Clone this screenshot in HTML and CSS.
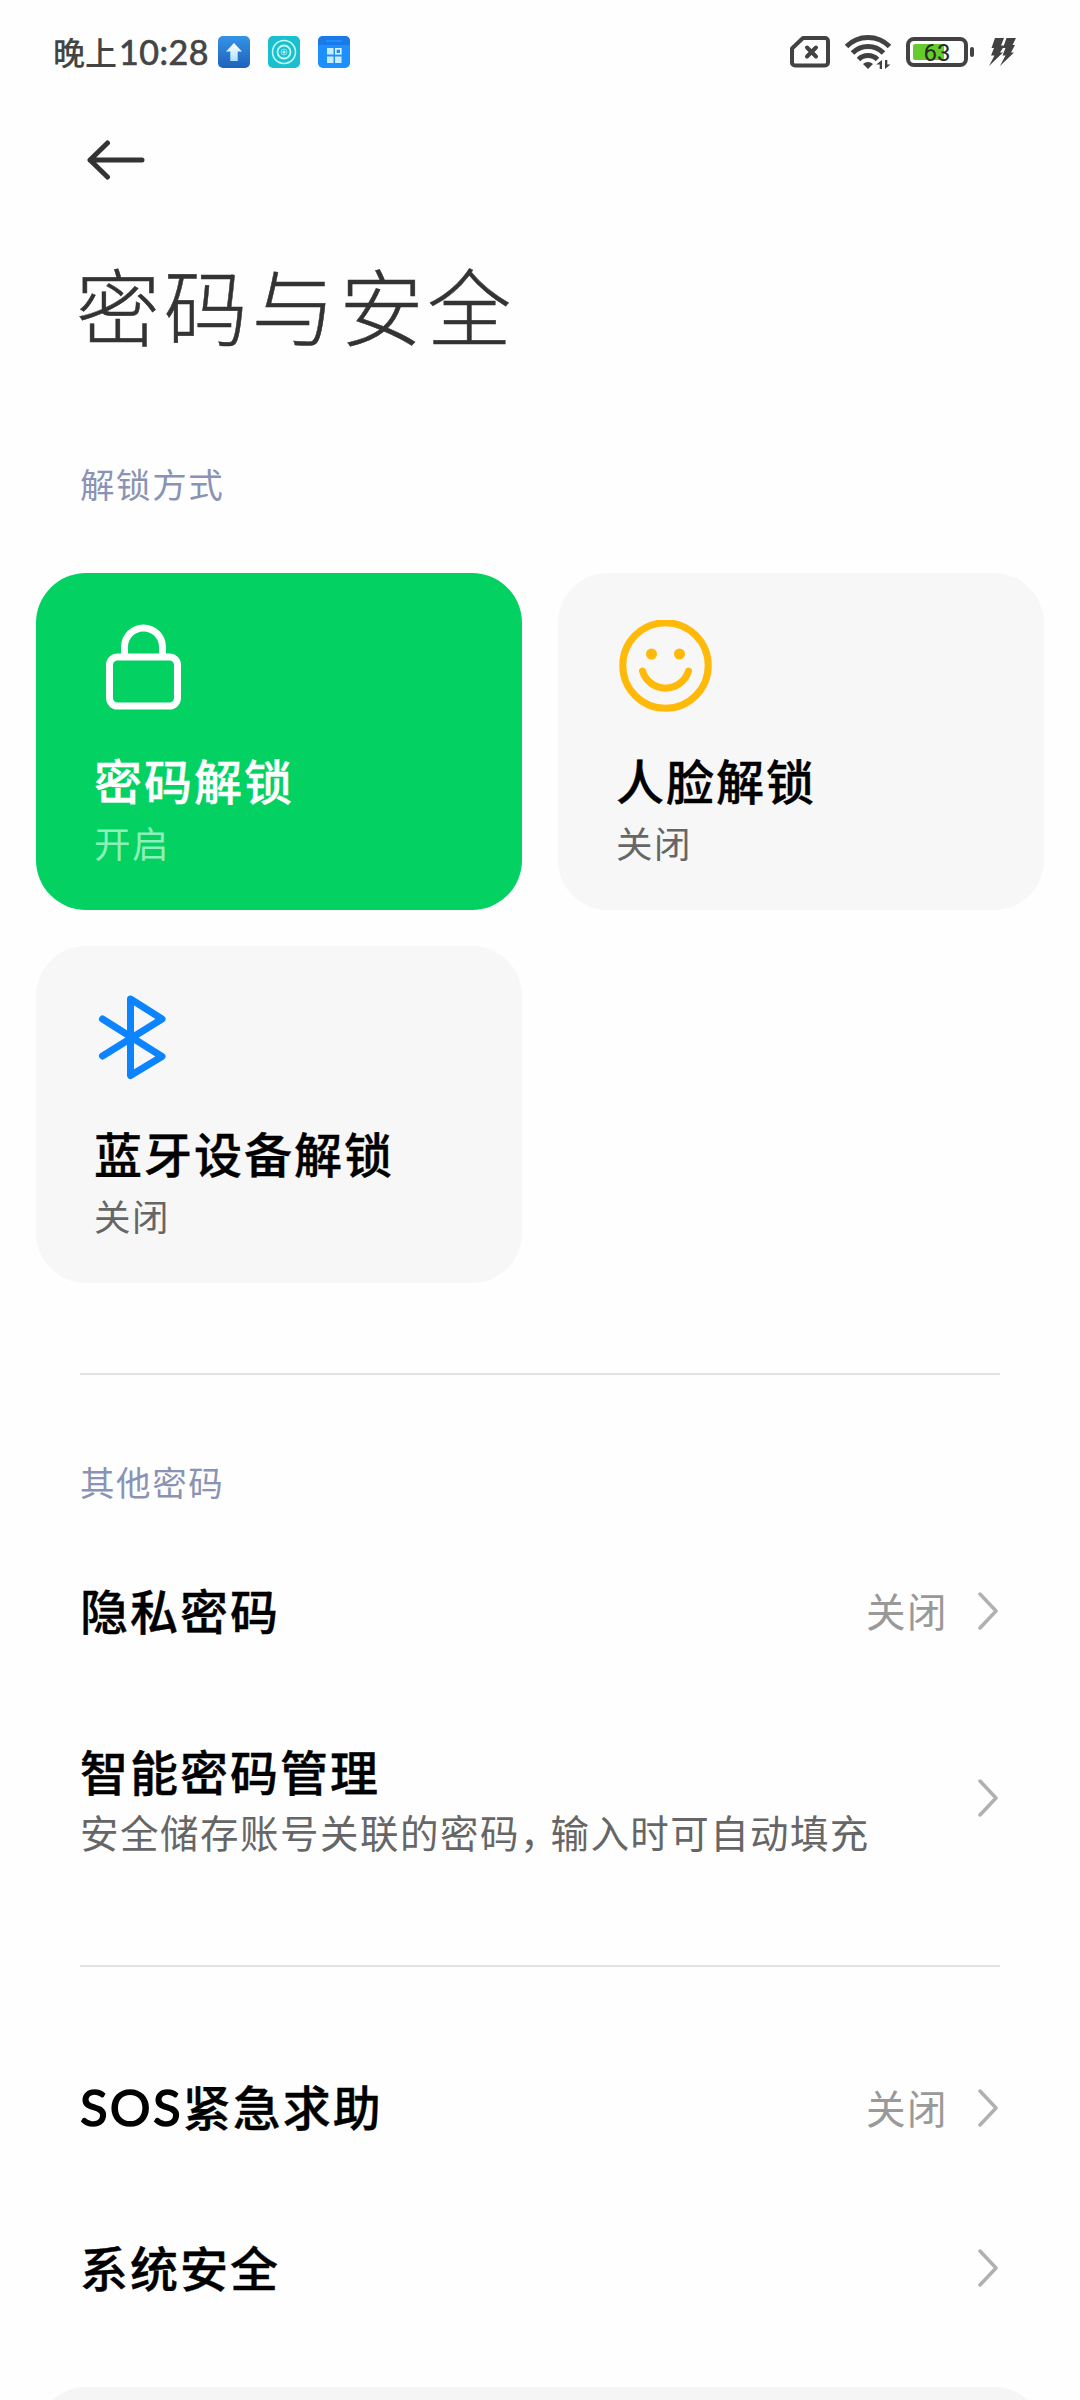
FILE: index.html
```html
<!DOCTYPE html>
<html lang="zh-CN">
<head>
<meta charset="utf-8">
<title>密码与安全</title>
<link rel="stylesheet" href="styles.css">
</head>
<body>
<div class="screen">
  <header class="status-bar">
    <div class="status-left">
      <span class="clock">晚上<span class="digits">10:28</span></span>
      <svg class="app-icon" viewBox="0 0 32 32">
        <defs>
          <linearGradient id="blue" x1="0" y1="0" x2="0" y2="1"><stop offset="0" stop-color="#3493e6"/><stop offset="1" stop-color="#1e62ba"/></linearGradient>
          <linearGradient id="arrow" x1="0" y1="0" x2="0" y2="1"><stop offset="0" stop-color="#fff"/><stop offset="1" stop-color="#aee0fa"/></linearGradient>
        </defs>
        <rect width="32" height="32" rx="5" fill="url(#blue)"/>
        <path d="M16 7l8 8.500h-4.300V25h-7.400v-9.500H8z" fill="url(#arrow)"/>
      </svg>
      <svg class="app-icon" viewBox="0 0 32 32">
        <rect width="32" height="32" rx="5" fill="#1bc0d0"/>
        <g fill="none" stroke="#c8fbf6" stroke-width="1.500"><circle cx="16" cy="16" r="11.500"/><circle cx="16" cy="16" r="6.500" stroke-width="1.800"/></g>
        <circle cx="16" cy="16" r="3" fill="none" stroke="#7fe6e6" stroke-width="1"/>
        <circle cx="16" cy="16" r="1.500" fill="#d8fffa"/>
      </svg>
      <svg class="app-icon" viewBox="0 0 32 32">
        <rect width="32" height="32" rx="5" fill="#1e8fff"/>
        <path d="M0 9V5a5 5 0 0 1 5-5h22a5 5 0 0 1 5 5v4z" fill="#1a7ae6"/>
        <rect x="8" y="4" width="16" height="2" rx="1" fill="#1e8fff"/>
        <g fill="#c9ecff"><rect x="9" y="12" width="6.500" height="6.500"/><rect x="9" y="20.500" width="6.500" height="6.500"/><rect x="17" y="20.500" width="6.500" height="6.500"/></g>
        <rect x="17.800" y="12.800" width="5" height="5" fill="#1e8fff" stroke="#e4f6ff" stroke-width="1.600"/>
      </svg>
    </div>
    <div class="status-right">
      <svg class="sim" viewBox="0 0 40 32">
        <path d="M13 2h22a3 3 0 0 1 3 3v21.500a3 3 0 0 1-3 3H5a3 3 0 0 1-3-3V12.500z" fill="none" stroke="#424242" stroke-width="4" stroke-linejoin="round"/>
        <path d="M17 11.500l9 9m0-9l-9 9" stroke="#424242" stroke-width="4" stroke-linecap="round"/>
      </svg>
      <svg class="wifi" viewBox="0 0 46 36">
        <g fill="none" stroke="#424242" stroke-width="5">
          <path d="M1.500 12.500a30 30 0 0 1 43 0"/>
          <path d="M7.500 19a21.500 21.500 0 0 1 31 0"/>
          <path d="M13.500 25.500a13.500 13.500 0 0 1 19 0"/>
        </g>
        <path d="M18 30a7 7 0 0 1 10 0l-5 5z" fill="#424242"/>
        <path d="M37 26v9h-2.300v-4.500h-3.500zM40 35v-9h2.300v4.500h3.200z" fill="#424242"/>
      </svg>
      <div class="battery">
        <span class="battery-body"><span class="battery-level" style="width:31px"></span><span class="battery-text">63</span></span>
        <span class="battery-nub"></span>
      </div>
      <svg class="bolt" viewBox="0 0 28 28">
        <path d="M7 0h9l-3 7.500h3.500L12 14.500h3L1 28l5.500-10.500H3L6 10H3.500zM18.500 0H28l-3.500 7H27l-4 7.500h3L12 28l5.500-10.500H14.500l3-7.500H15z" fill="#424242"/>
      </svg>
    </div>
  </header>

  <nav class="nav">
    <svg class="back" viewBox="0 0 58 40"><path d="M55 20H3M20.500 3L3 20l17.500 17" fill="none" stroke="#333" stroke-width="5" stroke-linecap="round" stroke-linejoin="round"/></svg>
  </nav>
  <h1 class="title">密码与安全</h1>

  <h2 class="label label-unlock">解锁方式</h2>
  <section class="cards">
    <article class="card card-on">
      <svg class="card-icon" viewBox="0 0 96 96"><g fill="none" stroke="#fff" stroke-width="7"><rect x="13.500" y="37" width="68" height="49" rx="8"/><path d="M28.500 37v-10a19 19 0 0 1 38 0v10"/></g></svg>
      <h3 class="item-title">密码解锁</h3>
      <p class="card-state">开启</p>
    </article>
    <article class="card">
      <svg class="card-icon" viewBox="0 0 96 96"><g fill="none" stroke="#ffb909" stroke-width="7" stroke-linecap="round"><circle cx="47.500" cy="45.500" r="42.700"/><path d="M24.500 51a24 24 0 0 0 46 0"/></g><circle cx="33.500" cy="34" r="5.500" fill="#ffb909"/><circle cx="61.500" cy="34" r="5.500" fill="#ffb909"/></svg>
      <h3 class="item-title">人脸解锁</h3>
      <p class="card-state">关闭</p>
    </article>
    <article class="card">
      <svg class="card-icon" viewBox="0 0 96 96"><path d="M6.500 26L66 63.500 34.500 82.500V6L66 26 6.500 63" fill="none" stroke="#0d84ff" stroke-width="7" stroke-linecap="round" stroke-linejoin="round"/></svg>
      <h3 class="item-title">蓝牙设备解锁</h3>
      <p class="card-state">关闭</p>
    </article>
  </section>

  <hr class="divider">
  <h2 class="label label-other">其他密码</h2>
  <section class="list">
    <div class="row">
      <h3 class="item-title">隐私密码</h3>
      <span class="value">关闭</span>
      <svg class="chevron" viewBox="0 0 20 38"><path d="M2 2l16 17L2 36"/></svg>
    </div>
    <div class="row row-tall">
      <div class="row-text">
        <h3 class="item-title">智能密码管理</h3>
        <p class="summary">安全储存账号关联的密码<span class="comma">，</span><span class="summary-tail">输入时可自动填充</span></p>
      </div>
      <svg class="chevron" viewBox="0 0 20 38"><path d="M2 2l16 17L2 36"/></svg>
    </div>
  </section>

  <hr class="divider">
  <section class="list list-more">
    <div class="row">
      <h3 class="item-title"><span class="latin">SOS</span>紧急求助</h3>
      <span class="value">关闭</span>
      <svg class="chevron" viewBox="0 0 20 38"><path d="M2 2l16 17L2 36"/></svg>
    </div>
    <div class="row">
      <h3 class="item-title">系统安全</h3>
      <svg class="chevron" viewBox="0 0 20 38"><path d="M2 2l16 17L2 36"/></svg>
    </div>
  </section>
  <section class="next-card"></section>
</div>
</body>
</html>
```
FILE: styles.css
```css
* { box-sizing: border-box; margin: 0; padding: 0; }
body { background: #fefefe; font-family: "Noto Sans CJK SC", sans-serif; color: #000; }
svg { display: block; flex: none; }
.screen { width: 1080px; height: 2400px; overflow: hidden; display: flex; flex-direction: column; }

.status-bar { height: 104px; flex: none; padding: 0 64px 0 53px; display: flex; justify-content: space-between; align-items: center; }
.status-left, .status-right { display: flex; align-items: center; }
.status-left { gap: 18px; }
.clock { width: 147px; font-size: 32px; line-height: 38px; padding-bottom: 1px; font-weight: 500; color: #444; white-space: nowrap; }
.digits { font-family: Lato, sans-serif; font-size: 34px; font-weight: 400; margin-left: 2px; letter-spacing: 0.500px; -webkit-text-stroke: 0.700px #444; }
.app-icon { width: 32px; height: 32px; }
.sim { width: 40px; height: 32px; margin-right: 15px; }
.wifi { width: 46px; height: 36px; margin-right: 15px; }
.battery { display: flex; align-items: center; gap: 2px; margin-right: 14px; }
.battery-body { display: block; position: relative; width: 62px; height: 30px; border: 4px solid #424242; border-radius: 8px; padding: 3px; }
.battery-level { display: block; height: 16px; border-radius: 2px; background: #66cb2c; }
.battery-text { position: absolute; inset: 0; text-align: center; font: 400 24px/24px Roboto, sans-serif; color: #252a22; }
.battery-nub { width: 4px; height: 10px; border-radius: 2px; background: #424242; }
.bolt { width: 28px; height: 28px; }

.nav { height: 112px; flex: none; padding: 36px 87px 0; }
.back { width: 58px; height: 40px; }
.title { flex: none; height: 180px; padding-left: 76px; font-size: 84px; line-height: 175px; font-weight: 300; letter-spacing: 3.800px; color: #333; -webkit-text-stroke: 0.500px #333; }

.label { flex: none; padding-left: 80px; font-size: 34.500px; line-height: 50px; font-weight: 400; letter-spacing: 1.600px; color: #8a93b3; }
.label-unlock { margin-top: 62px; height: 115px; }
.label-other { margin-top: 81px; height: 75px; }

.cards { flex: none; padding: 0 36px; display: grid; grid-template-columns: 486px 486px; gap: 36px; }
.card { height: 337px; border-radius: 50px; background: #f7f7f7; padding: 47px 58px 0; }
.card-on { background: #03d162; color: #fff; }
.card-icon { width: 96px; height: 96px; margin-left: 2px; }
.item-title { font-size: 48px; line-height: 60px; font-weight: 500; letter-spacing: 2px; white-space: nowrap; -webkit-text-stroke: 0.400px currentColor; }
.card .item-title { margin-top: 33px; }
.card-state { font-size: 36.500px; line-height: 50px; letter-spacing: 1.500px; color: #666; margin-top: 9px; }
.card-on .card-state { color: #8cf0b8; }

.divider { flex: none; border: 0; height: 2px; margin: 90px 80px 0; background: #e3e3e3; }
.list { flex: none; padding: 0 80px; }
.list + .divider { margin-top: 60px; }
.list-more { padding-top: 61px; }
.row { height: 160px; display: flex; align-items: center; }
.row-tall { height: 214px; }
.row .item-title, .row-text { flex: 1; }
.row > .item-title { padding-bottom: 4px; }
.latin { font-family: Lato, sans-serif; font-size: 51px; font-weight: 400; letter-spacing: 2.200px; -webkit-text-stroke: 1.500px #000; }
.value { font-size: 39.500px; line-height: 50px; letter-spacing: 1.500px; color: #999; margin-right: 30px; padding-bottom: 3px; }
.summary { font-size: 38.500px; line-height: 52px; margin-top: 5px; letter-spacing: 1.500px; color: #666; white-space: nowrap; }
.comma { letter-spacing: -8px; }
.summary-tail { letter-spacing: 1.400px; }
.chevron { width: 20px; height: 38px; margin-right: 2px; fill: none; stroke: #b0b0b0; stroke-width: 3.500; stroke-linecap: round; stroke-linejoin: round; }
.next-card { flex: none; height: 80px; margin: 39px 36px 0; border-radius: 50px 50px 0 0; background: #f5f5f5; }
```
